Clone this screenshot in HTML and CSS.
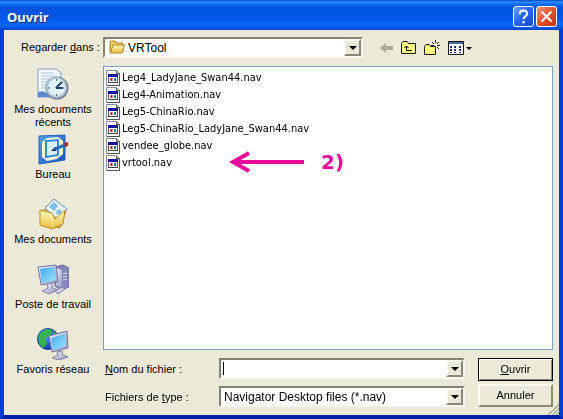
FILE: index.html
```html
<!DOCTYPE html>
<html lang="fr">
<head>
<meta charset="utf-8">
<meta name="viewport" content="width=device-width, initial-scale=1">
<title>Ouvrir</title>
<link rel="stylesheet" href="styles.css">
</head>
<body>
<svg class="defs" aria-hidden="true">
  <defs>
    <linearGradient id="folder" x1="0" y1="0" x2="0" y2="1"><stop offset="0" stop-color="#fffbc0"/><stop offset="1" stop-color="#e9bd3a"/></linearGradient>
    <linearGradient id="screen" x1="0" y1="0" x2="1" y2="1"><stop offset="0" stop-color="#43a5f3"/><stop offset="1" stop-color="#9ee8fb"/></linearGradient>
    <linearGradient id="desk" x1="0" y1="0" x2="1" y2="1"><stop offset="0" stop-color="#52a2ef"/><stop offset="1" stop-color="#1553b5"/></linearGradient>
    <linearGradient id="silver" x1="0" y1="0" x2="1" y2="1"><stop offset="0" stop-color="#f4f5ff"/><stop offset="1" stop-color="#9092bd"/></linearGradient>
    <radialGradient id="globe" cx=".35" cy=".3" r=".8"><stop offset="0" stop-color="#5fa3ff"/><stop offset="1" stop-color="#0a2d9c"/></radialGradient>
    <symbol id="nav-file" viewBox="0 0 16 16">
      <path d="M.5 .5H10.500L13.500 3.500V15.500H.5Z" fill="#fff" stroke="#85909a"/>
      <path d="M10.500 1V3.500H13.500V15.500H1" fill="none" stroke="#4c5258"/>
      <path d="M2.500 4.500H11.500V12.500H2.500Z" fill="#fff" stroke="#55596a"/>
      <path d="M2 4H12V7H2Z" fill="#15159c"/>
      <path d="M4 9.500L6 8V11Z" fill="#d02020" stroke="#d02020"/><path d="M8 8H10V11H8Z" fill="#217c9a"/>
      <path d="M2 12.500H12" stroke="#444"/>
    </symbol>
  </defs>
</svg>
<main class="dialog">
  <header class="titlebar">
    <h1>Ouvrir</h1>
    <button class="caption help" type="button" aria-label="Aide"><svg viewBox="0 0 21 21"><path d="M6.500 8V7Q6.500 4 10.500 4T14.500 7.500Q14.500 9 12.500 10.300T10.500 13.500" fill="none" stroke="#fff" stroke-width="2.200"/><path d="M9.300 15.500h2.400v2.400h-2.400z" fill="#fff"/></svg></button>
    <button class="caption close" type="button" aria-label="Fermer"><svg viewBox="0 0 21 21"><path d="M5 5l11 11M16 5l-11 11" stroke="#fff" stroke-width="2.400"/></svg></button>
  </header>
  <form class="content">
    <div class="lookin">
      <label for="folder-select">Regarder <u>d</u>ans :</label>
      <div class="combo">
        <svg class="folder-icon" viewBox="0 0 16 16"><path d="M1 13V3l1-1h4l2 2h5l1 1v8z" fill="#efcf61" stroke="#a77e26"/><path d="M1.500 14L4 6h11.500L13 14z" fill="url(#folder)" stroke="#b18a2e"/></svg>
        <select id="folder-select"><option>VRTool</option></select>
        <span class="drop"></span>
      </div>
      <div class="tools">
        <button type="button" aria-label="Précédent" disabled><svg width="14" height="16" viewBox="0 0 14 16"><path d="M0 8L6 3V6H13V10H6V13Z" fill="#aaa899"/></svg></button>
        <button type="button" aria-label="Dossier parent"><svg width="16" height="16" viewBox="0 0 16 16"><path d="M.5 13.500V3.500L2 1.500H6L7.500 3.500H14.500V13.500Z" fill="#ffff7d" stroke="#171708"/><path d="M5.500 6V10.500H11M3.500 8L5.500 6L7.500 8" fill="none" stroke="#000"/></svg></button>
        <button type="button" aria-label="Nouveau dossier"><svg width="17" height="16" viewBox="0 0 17 16"><path d="M.5 14.500V6.500L2 4.500H5L6.500 6.500H11.500V14.500Z" fill="#ffff7d" stroke="#171708"/><path d="M11.500 0V3M11.500 7V10M7 5.500H10M13 5.500H16M8 2l2 2M13 7l2 2M15 2l-2 2" stroke="#222" fill="none"/></svg></button>
        <button type="button" aria-label="Affichages"><svg width="24" height="16" viewBox="0 0 24 16"><path d="M.5 1.500H15.500V14.500H.5Z" fill="#fff" stroke="#111"/><path d="M1 2H15V4H1Z" fill="#416da3"/><path d="M2 6H4V8H2ZM6 6H8V8H6ZM11 6H13V8H11ZM2 9H4V11H2ZM6 9H8V11H6ZM11 9H13V11H11ZM2 12H4V13H2ZM6 12H8V13H6ZM11 12H13V13H11Z" fill="#26267a"/><path d="M18 7h6l-3 3z" fill="#000"/></svg></button>
      </div>
    </div>
    <div class="browser">
      <nav class="places" aria-label="Emplacements">
        <button type="button"><svg viewBox="0 0 32 32"><path d="M1 1H20L24 5V29H1Z" fill="#f4f8ff" stroke="#7d9ccd"/><path d="M4 5H17M4 8H18M4 11H14M4 14H11M4 17H9M4 20H9" stroke="#a9bddd"/><path d="M1 29V24q7-3 12 5z" fill="#5b8ad2"/><circle cx="20" cy="20" r="11.500" fill="#6d8296"/><circle cx="19.500" cy="19.500" r="9.500" fill="#e2f1f7" stroke="#b7cad4" stroke-width="2"/><path d="M19 20l6-6M19 20h7" stroke="#214568" stroke-width="2"/><path d="M19.500 11v2M27 20h-2M19.500 28v-2M11 20h2" stroke="#436785"/></svg><span>Mes documents récents</span></button>
        <button type="button"><svg viewBox="0 0 32 32"><path d="M2 3L28 2V27L2 31Z" fill="url(#desk)" stroke="#2465bd"/><path d="M5 9L10 5L21 4L26 8V21L20 26L10 28L5 24Z" fill="#f7f4d6"/><path d="M9 8L21 7V22L9 24Z" fill="#d9eeff" stroke="#338bd3" stroke-width="2"/><path d="M18 16L28 12" stroke="#256eb3" stroke-width="3"/><path d="M14 18l4-4 1 4z" fill="#153a75"/><path d="M27 10l4-1v4l-3 1z" fill="#a72d32"/></svg><span>Bureau</span></button>
        <button type="button"><svg viewBox="0 0 32 32"><path d="M3 14L14 8L29 13L23 30L5 26Z" fill="#efc74c" stroke="#b98622"/><path d="M8 10L17 1L30 11L22 23Z" fill="#e5f5ff" stroke="#6c94bf"/><path d="M12 9l5-5 4 4-4 5zM20 12h4v4h-5z" fill="#7bbceb"/><path d="M3 12L15 15L18 21L28 12L26 26L15 31L3 27Z" fill="url(#folder)" stroke="#bc8d27"/><path d="M5 14L14 17L16 29" fill="none" stroke="#fff6a4"/></svg><span>Mes documents</span></button>
        <button type="button"><svg viewBox="0 0 32 32"><path d="M18 4L26 2L32 5V24L24 27L18 23Z" fill="#8587b6" stroke="#6769a0"/><path d="M19 5L25 7V25L19 22Z" fill="url(#silver)"/><path d="M26 11l4-1M26 14l4-1M26 17l4-1" stroke="#ddddf2"/><path d="M1 4L19 2L21 19L4 22Z" fill="url(#silver)" stroke="#7677a8"/><path d="M3 6L17 4L19 17L5 20Z" fill="url(#screen)"/><path d="M10 21l5-1 1 5 5 2-9 4-7-3 6-3z" fill="url(#silver)" stroke="#898cae"/><path d="M18 28l7-4 3 2-7 5z" fill="#cdd0e5" stroke="#7e83aa"/></svg><span>Poste de travail</span></button>
        <button type="button"><svg viewBox="0 0 32 32"><circle cx="11" cy="11" r="10.500" fill="url(#globe)" stroke="#154694"/><path d="M2 7q6-8 13-5l-2 6-5 2 2 6-4 4q-6-5-4-13zM16 2l5 6-4 4z" fill="#35b34c"/><path d="M12 8L30 3L31 20L15 24Z" fill="url(#silver)" stroke="#7578a8"/><path d="M14 10L28 6L29 18L16 22Z" fill="url(#screen)"/><path d="M20 24l5-1 1 4 5 2-9 3-7-2 6-3z" fill="url(#silver)" stroke="#8587a5"/></svg><span>Favoris réseau</span></button>
      </nav>
      <section class="listing">
        <ul class="files">
          <li><svg><use href="#nav-file"/></svg>Leg4_LadyJane_Swan44.nav</li>
          <li><svg><use href="#nav-file"/></svg>Leg4-Animation.nav</li>
          <li><svg><use href="#nav-file"/></svg>Leg5-ChinaRio.nav</li>
          <li><svg><use href="#nav-file"/></svg>Leg5-ChinaRio_LadyJane_Swan44.nav</li>
          <li><svg><use href="#nav-file"/></svg>vendee_globe.nav</li>
          <li><svg><use href="#nav-file"/></svg>vrtool.nav</li>
        </ul>
        <div class="note"><svg viewBox="0 0 76 22"><path d="M75 11H5M20 2L4 11L20 20" fill="none" stroke="#ed0a9b" stroke-width="4"/></svg><strong>2)</strong></div>
      </section>
      <div class="footer">
        <div class="fields">
          <label for="filename"><u>N</u>om du fichier :</label>
          <div class="combo"><input id="filename" type="text" autofocus><button class="drop" type="button" aria-label="Noms récents"></button></div>
          <label for="filetype">Fichiers de <u>t</u>ype :</label>
          <div class="combo"><select id="filetype"><option>Navigator Desktop files (*.nav)</option></select><span class="drop"></span></div>
        </div>
        <div class="actions">
          <button class="default" type="submit"><u>O</u>uvrir</button>
          <button type="button">Annuler</button>
        </div>
      </div>
    </div>
    <svg class="grip" viewBox="0 0 12 12" aria-hidden="true"><path d="M1 12L12 1M5 12L12 5M9 12L12 9" stroke="#aaa794" stroke-width="2"/><path d="M0 12L12 0M4 12L12 4M8 12L12 8" stroke="#fff"/></svg>
  </form>
</main>
</body>
</html>
```
FILE: styles.css
```css
* { box-sizing: border-box; }
body { margin: 0; font: 11px/13px "Liberation Sans", Arial, sans-serif; color: #000; }
button, input, select { font: inherit; color: inherit; margin: 0; }
.defs { position: absolute; width: 0; height: 0; }

.dialog {
  display: flex;
  flex-direction: column;
  min-height: 100vh;
  background: #0741d8;
}

.titlebar {
  display: flex;
  align-items: center;
  gap: 2px;
  height: 30px;
  padding: 3px 6px 0 7px;
  background: linear-gradient(#0747c7 0, #2e8cff 2px, #0a62ee 5px, #0053de 9px, #0056e6 18px, #0667fb 25px, #0560f2 27px, #003fc5 30px);
}
.titlebar h1 {
  flex: 1;
  margin: 0;
  color: #fff;
  font: bold 13px/16px "Noto Sans", sans-serif;
  text-shadow: 1px 1px #0a2a87;
}
.caption {
  width: 21px;
  height: 21px;
  padding: 0;
  border: 1px solid #fff;
  border-radius: 3px;
}
.caption svg { display: block; width: 19px; height: 19px; }
.help { background: linear-gradient(135deg, #6b9cff, #2663e6 50%, #1b50ca); }
.close { background: linear-gradient(135deg, #f0987c, #e2512b 50%, #bf3412); }

.content {
  position: relative;
  flex: 1;
  display: flex;
  flex-direction: column;
  gap: 8px;
  padding: 7px 6px 8px 0;
  background: #ece9d8;
  border: solid #003ddb;
  border-width: 0 4px 4px;
  border-bottom-color: #0020a8;
}

.lookin {
  display: grid;
  grid-template-columns: 91px 1fr 182px;
  column-gap: 8px;
  align-items: center;
}
.lookin label { padding-left: 17px; white-space: nowrap; }
.lookin .combo { min-width: 0; }
.tools { display: flex; gap: 7px; padding-left: 9px; }
.tools button { padding: 0; border: 0; background: none; }
.tools svg { display: block; }

.combo {
  display: flex;
  height: 21px;
  background: #fff;
  border: 2px solid;
  border-color: #858274 #f7f6ee #f7f6ee #858274;
  font-size: 12px;
}
.combo select, .combo input {
  flex: 1;
  min-width: 0;
  padding: 1px 3px 0;
  border: 0;
  outline: 0;
  background: none;
  appearance: none;
}
.combo input:focus {
  caret-color: transparent;
  background: linear-gradient(#000, #000) 2px center / 1px 13px no-repeat;
}
.folder-icon { width: 16px; height: 16px; margin-left: 4px; }
.drop {
  display: flex;
  align-items: center;
  justify-content: center;
  width: 17px;
  padding: 0;
  background: #ece9d8;
  border: 2px solid;
  border-color: #f8f7f0 #8b887a #8b887a #f8f7f0;
  pointer-events: none;
}
.drop::before {
  content: "";
  border: 4px solid transparent;
  border-top-color: #000;
  border-bottom: 0;
}

.browser {
  flex: 1;
  display: grid;
  grid-template-columns: 91px 1fr;
  grid-template-rows: 1fr auto;
  gap: 8px;
}
.places { grid-row: 1 / 3; padding-left: 7px; }
.places button {
  display: flex;
  flex-direction: column;
  align-items: center;
  gap: 3px;
  width: 100%;
  height: 65px;
  padding: 2px 0 0;
  border: 0;
  background: none;
}
.places svg { flex: none; width: 32px; height: 32px; }

.listing {
  position: relative;
  background: #fff;
  border: 1px solid #7f9db9;
}
.files {
  margin: 0;
  padding: 2px;
  list-style: none;
  font: 11px/17px "DejaVu Sans Condensed", "DejaVu Sans", sans-serif;
}
.files li { display: flex; align-items: center; height: 17px; }
.files svg { width: 16px; height: 16px; }
.note {
  position: absolute;
  top: 84px;
  left: 125px;
  display: flex;
  align-items: center;
  gap: 16px;
  color: #ed0a9b;
  font: 20px/22px "DejaVu Sans", sans-serif;
}
.note svg { width: 76px; height: 22px; }

.footer { display: flex; gap: 13px; }
.fields {
  flex: 1;
  display: grid;
  grid-template-columns: 116px 1fr;
  row-gap: 7px;
  align-items: center;
  align-content: start;
}
.fields label { padding: 2px 0 0 2px; }
.actions { display: grid; gap: 3px; width: 75px; }
.actions button {
  height: 23px;
  padding: 0;
  background: #ece9d8;
  border: 2px solid;
  border-color: #fbfaf4 #8b887a #8b887a #fbfaf4;
}
.actions .default {
  border: 1px solid #000;
  box-shadow: inset 1px 1px #fff, inset -1px -1px #8b887a;
}
.grip { position: absolute; right: 0; bottom: 0; width: 12px; height: 12px; }
```
